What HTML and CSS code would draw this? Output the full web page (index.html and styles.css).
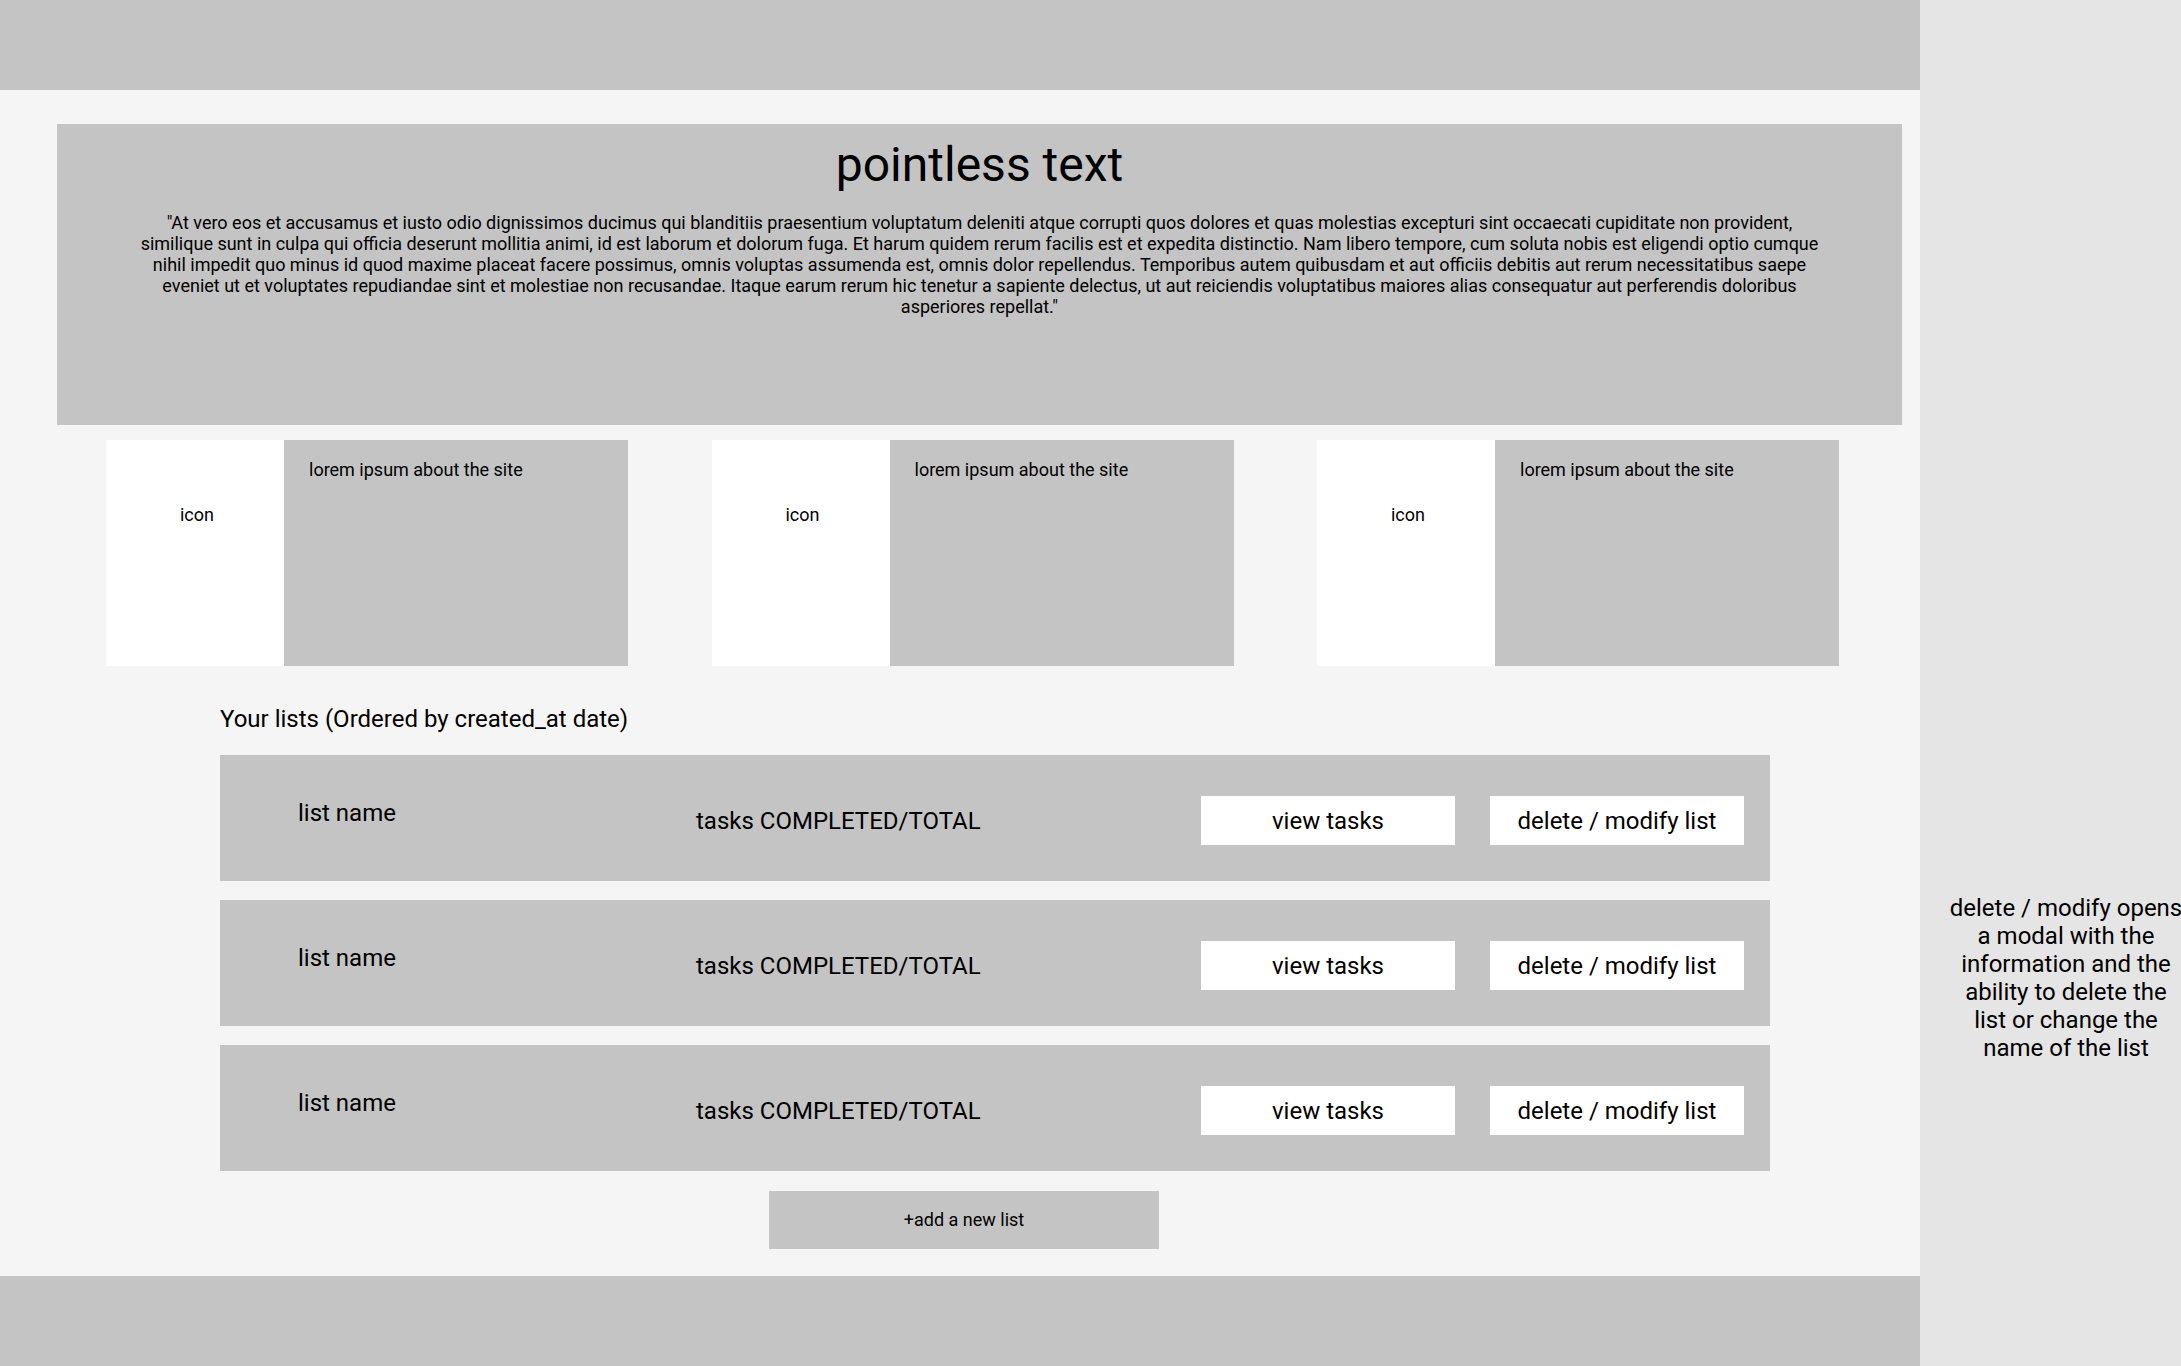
FILE: index.html
```html
<!DOCTYPE html>
<html lang="en">
<head>
<meta charset="utf-8">
<title>Lists</title>
<link rel="stylesheet" href="styles.css">
</head>
<body>
<div class="page">
  <div class="frame">
    <header class="topbar"></header>
    <main class="main">
      <section class="hero">
        <h1 class="hero-title">pointless text</h1>
        <p class="hero-text">"At vero eos et accusamus et iusto odio dignissimos ducimus qui blanditiis praesentium voluptatum deleniti atque corrupti quos dolores et quas molestias excepturi sint occaecati cupiditate non provident, similique sunt in culpa qui officia deserunt mollitia animi, id est laborum et dolorum fuga. Et harum quidem rerum facilis est et expedita distinctio. Nam libero tempore, cum soluta nobis est eligendi optio cumque nihil impedit quo minus id quod maxime placeat facere possimus, omnis voluptas assumenda est, omnis dolor repellendus. Temporibus autem quibusdam et aut officiis debitis aut rerum necessitatibus saepe eveniet ut et voluptates repudiandae sint et molestiae non recusandae. Itaque earum rerum hic tenetur a sapiente delectus, ut aut reiciendis voluptatibus maiores alias consequatur aut perferendis doloribus asperiores repellat."</p>
      </section>
      <section class="features">
        <div class="feature">
          <div class="feature-icon">icon</div>
          <div class="feature-text">lorem ipsum about the site</div>
        </div>
        <div class="feature">
          <div class="feature-icon">icon</div>
          <div class="feature-text">lorem ipsum about the site</div>
        </div>
        <div class="feature">
          <div class="feature-icon">icon</div>
          <div class="feature-text">lorem ipsum about the site</div>
        </div>
      </section>
      <section class="lists">
        <h2 class="lists-title">Your lists (Ordered by created_at date)</h2>
        <div class="list-row">
          <div class="list-name">list name</div>
          <div class="list-count">tasks COMPLETED/TOTAL</div>
          <div class="list-actions">
            <div class="btn">view tasks</div>
            <div class="btn">delete / modify list</div>
          </div>
        </div>
        <div class="list-row">
          <div class="list-name">list name</div>
          <div class="list-count">tasks COMPLETED/TOTAL</div>
          <div class="list-actions">
            <div class="btn">view tasks</div>
            <div class="btn">delete / modify list</div>
          </div>
        </div>
        <div class="list-row">
          <div class="list-name">list name</div>
          <div class="list-count">tasks COMPLETED/TOTAL</div>
          <div class="list-actions">
            <div class="btn">view tasks</div>
            <div class="btn">delete / modify list</div>
          </div>
        </div>
      </section>
      <div class="add-btn">+add a new list</div>
    </main>
    <footer class="bottombar"></footer>
  </div>
  <aside class="note">
    <p class="note-text">delete / modify opens a modal with the information and the ability to delete the list or change the name of the list</p>
  </aside>
</div>
</body>
</html>
```

FILE: styles.css
```css
html, body {
  margin: 0;
  padding: 0;
}

body {
  font-family: Roboto, "Liberation Sans", sans-serif;
  color: #000;
  background: #e5e5e5;
  overflow: hidden;
}

.page {
  display: flex;
  width: 2181px;
  height: 1366px;
}

.frame {
  width: 1920px;
  flex: 0 0 1920px;
  display: flex;
  flex-direction: column;
  background: #f5f5f5;
}

.topbar {
  height: 90px;
  background: #c4c4c4;
}

.main {
  flex: 1;
  padding-top: 34px;
  box-sizing: border-box;
}

.hero {
  margin-left: 57px;
  width: 1845px;
  height: 301px;
  background: #c4c4c4;
  padding-top: 13px;
  box-sizing: border-box;
}

.hero-title {
  margin: 0;
  font-size: 48px;
  line-height: 56px;
  font-weight: 400;
  text-align: center;
}

.hero-text {
  margin: 19px auto 0;
  width: 1690px;
  font-size: 18px;
  line-height: 21px;
  text-align: center;
}

.features {
  display: flex;
  gap: 83.5px;
  margin-top: 15px;
  padding-left: 106px;
}

.feature {
  display: flex;
  width: 522px;
  height: 226px;
}

.feature-icon {
  width: 178px;
  background: #fff;
  text-align: center;
  font-size: 18px;
  line-height: 21px;
  padding: 64px 0 0 4px;
  box-sizing: border-box;
}

.feature-text {
  flex: 1;
  background: #c4c4c4;
  font-size: 18px;
  line-height: 21px;
  padding: 19px 25px;
}

.lists {
  margin-left: 220px;
  width: 1550px;
}

.lists-title {
  margin: 39px 0 22px;
  font-size: 24px;
  line-height: 28px;
  font-weight: 400;
}

.list-row {
  display: flex;
  align-items: flex-start;
  height: 126px;
  background: #c4c4c4;
  padding: 0 26px 0 78px;
  box-sizing: border-box;
  font-size: 24px;
  line-height: 28px;
}

.list-row + .list-row {
  margin-top: 19px;
}

.list-name {
  width: 398px;
  margin-top: 44px;
}

.list-count {
  margin-top: 52px;
}

.list-actions {
  margin-left: auto;
  margin-top: 41px;
  display: flex;
  gap: 35px;
}

.btn {
  width: 254px;
  height: 49px;
  line-height: 50px;
  background: #fff;
  text-align: center;
}

.add-btn {
  margin: 20px 0 0 769px;
  width: 390px;
  height: 58px;
  line-height: 58px;
  background: #c4c4c4;
  text-align: center;
  font-size: 18px;
}

.bottombar {
  height: 90px;
  background: #c4c4c4;
}

.note {
  flex: 0 0 261px;
  background: #e5e5e5;
  padding: 894px 0 0 29px;
  box-sizing: border-box;
}

.note-text {
  margin: 0;
  width: 234px;
  font-size: 24px;
  line-height: 28px;
  text-align: center;
}
```
